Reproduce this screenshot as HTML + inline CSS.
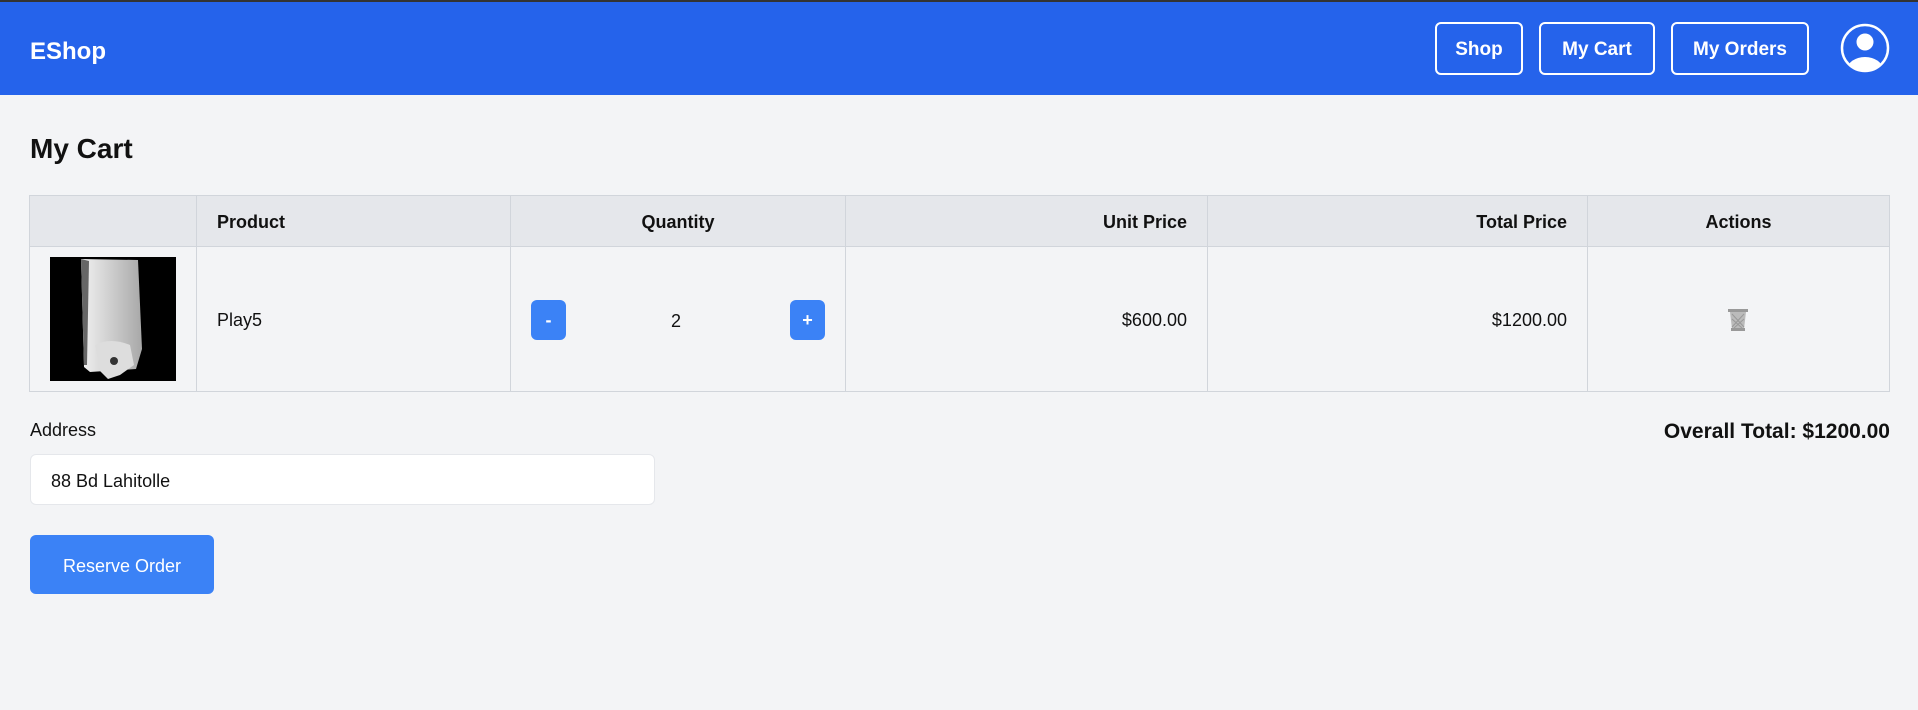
<!DOCTYPE html>
<html><head><meta charset="utf-8"><style>
*{box-sizing:border-box;margin:0;padding:0}
body{width:1918px;height:710px;background:#f3f4f6;font-family:"Liberation Sans",sans-serif;color:#111;position:relative;overflow:hidden}
.nav{position:absolute;left:0;top:0;width:1918px;height:95px;background:#2563eb;border-top:2px solid #333}
.brand{position:absolute;left:30px;top:36px;color:#fff;font-weight:bold;font-size:24px}
.nb{position:absolute;top:20px;height:53px;border:2px solid #fff;border-radius:6px;color:#fff;font-weight:bold;font-size:19px;display:flex;align-items:center;justify-content:center;padding-top:3px}
.abs{position:absolute}
h1{position:absolute;left:30px;top:133px;font-size:28px;font-weight:bold}
table{position:absolute;left:29px;top:195px;width:1861px;border-collapse:collapse;font-size:18px}
th,td{border:1px solid #d1d5db;padding:0 20px}
th{background:#e5e7eb;height:51px;font-weight:bold;padding-top:3px}
td{height:145px;padding-top:3px}
.qb{position:absolute;width:35px;height:40px;background:#3b82f6;border-radius:6px;color:#fff;font-weight:bold;font-size:18px;display:flex;align-items:center;justify-content:center}
</style></head><body>
<div class="nav">
<div class="brand">EShop</div>
<div class="nb" style="left:1435px;width:88px">Shop</div>
<div class="nb" style="left:1539px;width:116px">My Cart</div>
<div class="nb" style="left:1671px;width:138px">My Orders</div>
<svg class="abs" style="left:1840px;top:21px" width="50" height="50" viewBox="0 0 50 50"><defs><clipPath id="c"><circle cx="25" cy="25" r="23"/></clipPath></defs><circle cx="25" cy="25" r="23" fill="none" stroke="#fff" stroke-width="2.5"/><circle cx="25" cy="19" r="8.5" fill="#fff"/><ellipse cx="25" cy="47" rx="18" ry="13" fill="#fff" clip-path="url(#c)"/></svg>
</div>
<h1>My Cart</h1>
<table>
<tr><th style="width:167px"></th><th style="width:314px;text-align:left">Product</th><th style="width:335px">Quantity</th><th style="width:362px;text-align:right">Unit Price</th><th style="width:380px;text-align:right">Total Price</th><th>Actions</th></tr>
<tr><td></td><td>Play5</td><td></td><td style="text-align:right">$600.00</td><td style="text-align:right">$1200.00</td><td></td></tr>
</table>
<svg class="abs" style="left:50px;top:257px" width="126" height="124" viewBox="0 0 126 124"><defs><linearGradient id="g" x1="0" x2="1"><stop offset="0" stop-color="#f2f2f2"/><stop offset="1" stop-color="#a8a8a8"/></linearGradient></defs><rect width="126" height="124" fill="#000"/><path d="M31 2 L88 3 L92 92 L86 112 L40 115 L34 110Z" fill="url(#g)"/><path d="M31 2 L39 4 L37 108 L34 108Z" fill="#666"/><path d="M45 88 Q60 80 80 88 L84 108 L70 118 L58 122 L50 114Z" fill="#ddd"/><circle cx="64" cy="104" r="4" fill="#333"/></svg>
<div class="qb" style="left:531px;top:300px">-</div>
<div class="abs" style="left:671px;top:311px;font-size:18px">2</div>
<div class="qb" style="left:790px;top:300px">+</div>
<svg class="abs" style="left:1728px;top:309px" width="20" height="22" viewBox="0 0 20 22"><rect x="0" y="0" width="20" height="3" fill="#999"/><path d="M2 3 L18 3 L16 20 L4 20Z" fill="#bbb"/><path d="M4 5 L16 18 M16 5 L4 18 M4 10 L14 19 M16 10 L6 19" stroke="#999" stroke-width="1"/><rect x="3" y="19" width="14" height="3" fill="#999"/></svg>
<div class="abs" style="left:30px;top:420px;font-size:18px">Address</div>
<div class="abs" style="right:28px;top:420px;font-size:21px;font-weight:bold">Overall Total: $1200.00</div>
<div class="abs" style="left:30px;top:454px;width:625px;height:51px;background:#fff;border:1px solid #e5e7eb;border-radius:6px;padding:16px 20px;font-size:18px">88 Bd Lahitolle</div>
<div class="abs" style="left:30px;top:535px;width:184px;height:59px;background:#3b82f6;border-radius:6px;color:#fff;font-size:18px;display:flex;align-items:center;justify-content:center;padding-top:3px">Reserve Order</div>
</body></html>
